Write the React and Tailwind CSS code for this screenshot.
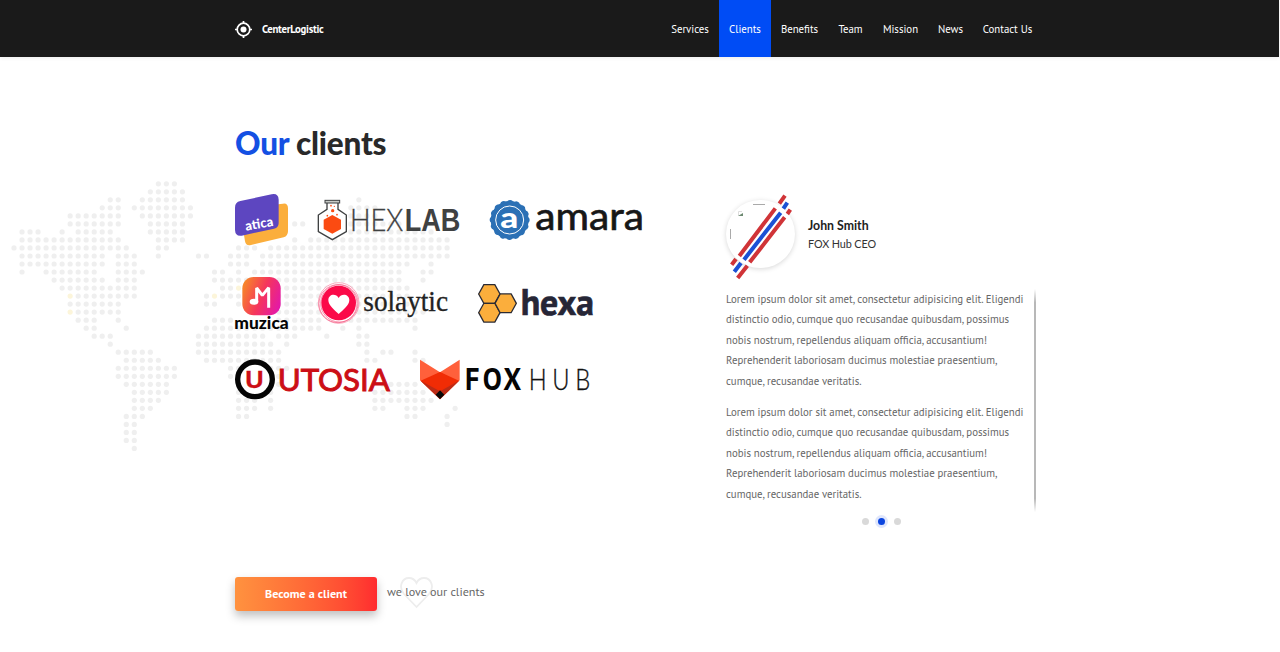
const MAP_ROWS = [
  "18-20", "17-21", "12-13,16-21,43", "11-13,15-22,42-45", "7-13,16-22,41-45",
  "7-13,17-21,35-36,40-48", "1-3,6,8-12,17-21,39-52", "1-13,18-21,35,37-54",
  "0-14,18-19,28-30,32-54", "1-11,13-15,18,23-24,27-29,31-54", "1-11,13-15,27-29,31-49,52",
  "1,4-10,13-16,25-26,28,30-48,51-52", "5-11,13-15,25-48,51", "6-15,26-49",
  "7-15,24-49", "7-13,24-25,28,32-50", "7-13,33-51", "8-10,13,25-27,33-38,41-50",
  "9-10,14,24-38,41,43,50", "10-12,23-31,33-35,39,43-44", "12,23-32,34,43-44",
  "13-17,23-33,44,46-47,50", "14-18,24-33,44-45,50-51", "13-20,27-34", "13-20,27-33",
  "14-19,28-33,46-50", "15-19,28-32,45-51", "15-18,28-30,32,45-52",
  "15-17,28-30,32,45-46,49-51,55", "14-16,28-29,49-50,54", "14-15,54", "14-15", "14-15", "15",
];
const HIGHLIGHTED = ["7-14", "7-16", "25-14", "28-13"];

function WorldMap() {
  const dots = [];
  MAP_ROWS.forEach((row, r) =>
    row.split(",").forEach((part) => {
      const [from, to = from] = part.split("-").map(Number);
      for (let c = from; c <= to; c++) dots.push([c, r]);
    })
  );
  return (
    <svg className="absolute left-0 top-[170px] -z-10" width="480" height="300" aria-hidden="true">
      {dots.map(([c, r]) => (
        <circle
          key={`${c}-${r}`}
          cx={14 + c * 8.02}
          cy={13.8 + r * 8.02}
          r="2.6"
          fill={HIGHLIGHTED.includes(`${c}-${r}`) ? "#fcf5da" : "#efefef"}
        />
      ))}
    </svg>
  );
}

function Word({ x, y, size, width, children, ...rest }) {
  return (
    <text x={x} y={y} fontSize={size} textLength={width} lengthAdjust="spacingAndGlyphs" {...rest}>
      {children}
    </text>
  );
}

function Atica() {
  return (
    <svg width="53" height="53" viewBox="0 0 159 159">
      <path d="M44 40 L144 29 Q159 27 159 43 V112 Q159 126 146 130 L48 153 Q33 157 30 142 L25 110 Z" fill="#fbae3c" />
      <path d="M16 21 L110 1 Q130 -3 131 17 V87 Q131 101 117 104 L20 125 Q1 128 0 108 V41 Q0 24 16 21Z" fill="#5d46c0" />
      <g transform="rotate(-10 34 108)">
        <Word x="33" y="110" size="40" width="84" fill="#fff" fontFamily="Lato, sans-serif" fontWeight="900">atica</Word>
      </g>
    </svg>
  );
}

function HexLab() {
  return (
    <svg className="overflow-visible" width="142" height="53" viewBox="0 0 426 159">
      <path d="M27 25 V46 L1 63 V113 L43 137 L85 113 V63 L60 46 V25" fill="#fff" stroke="#3f4142" strokeWidth="4" />
      <rect x="21" y="19" width="44" height="8" fill="#c7cbc7" stroke="#3f4142" strokeWidth="3" />
      <path d="M43 63 L69 77 V105 L43 119 L17 105 V77Z" fill="#fb4b12" />
      <circle cx="44" cy="50" r="5" fill="#fb4b12" />
      <circle cx="39" cy="35" r="2.5" fill="#fb4b12" />
      <circle cx="49" cy="37" r="2" fill="#fb4b12" />
      <circle cx="28" cy="65" r="2.500" fill="#fb4b12" />
      <circle cx="57" cy="62" r="2.500" fill="#fb4b12" />
      <Word x="96" y="111" size="92" width="160" fill="#3f4142" stroke="#3f4142" strokeWidth="1" fontFamily="Lato, sans-serif" fontWeight="300">HEX</Word>
      <Word x="260" y="111" size="94" width="167" fill="#3f4142" fontFamily="Liberation Sans, sans-serif" fontWeight="700">LAB</Word>
    </svg>
  );
}

function Amara() {
  return (
    <svg className="overflow-visible" width="153" height="53" viewBox="0 0 459 159">
      <circle cx="59" cy="78" r="57" fill="#2b70b5" />
      <circle cx="59" cy="78" r="51" fill="none" stroke="#2b70b5" strokeWidth="18" pathLength="160" strokeDasharray="0.1 9.9" strokeLinecap="round" />
      <circle cx="59" cy="78" r="42" fill="none" stroke="#fff" strokeWidth="3" />
      <Word x="31" y="101" size="88" width="54" fill="#fff" fontFamily="Lato, sans-serif" fontWeight="900">a</Word>
      <Word x="136" y="108" size="118" width="326" fill="#171717" fontFamily="Lato, sans-serif" fontWeight="400" stroke="#171717" strokeWidth="2">amara</Word>
    </svg>
  );
}

function Muzica() {
  return (
    <svg className="overflow-visible" width="53" height="53" viewBox="0 0 159 159">
      <defs>
        <linearGradient id="muzica" x1="0" x2="1" y1=".3" y2=".7">
          <stop stopColor="#f7842a" />
          <stop offset=".5" stopColor="#f5365c" />
          <stop offset="1" stopColor="#e319a8" />
        </linearGradient>
      </defs>
      <rect x="22" y="0" width="115" height="115" rx="34" fill="url(#muzica)" />
      <path d="M65 76 V33 L82 55 L101 32 V92" fill="none" stroke="#fff" strokeWidth="9" strokeLinejoin="bevel" />
      <ellipse cx="57" cy="74" rx="13" ry="9" fill="#fff" />
      <Word x="-2" y="157" size="51" width="163" fill="#050505" fontFamily="Lato, sans-serif" fontWeight="900">muzica</Word>
    </svg>
  );
}

function Solaytic() {
  return (
    <svg className="overflow-visible" width="130" height="53" viewBox="0 0 390 159">
      <circle cx="62" cy="78" r="61" fill="#fff" stroke="#f45b83" strokeWidth="1.5" />
      <circle cx="60" cy="80" r="57" fill="none" stroke="#f45b83" strokeWidth="2" />
      <circle cx="64" cy="79" r="56" fill="none" stroke="#f45b83" strokeWidth="2" />
      <circle cx="62" cy="78" r="52" fill="#fb0a49" />
      <path d="M62 111 C50 99 31 86 31 69 C31 51 54 47 62 63 C70 47 94 51 94 69 C94 86 74 99 62 111Z" fill="#fff" />
      <Word x="136" y="101" size="91" width="254" fill="#222" stroke="#222" strokeWidth="1" fontFamily="Liberation Serif, serif">solaytic</Word>
    </svg>
  );
}

function Hexa() {
  const cell = "M-17 -29 H17 L33 0 L17 29 H-17 L-33 0Z";
  return (
    <svg className="overflow-visible" width="115" height="53" viewBox="0 0 345 159">
      <g fill="#fbae3c" stroke="#2a2a33" strokeWidth="4">
        <path d={cell} transform="translate(34 51) scale(.97)" />
        <path d={cell} transform="translate(34 107) scale(.97)" />
        <path d={cell} transform="translate(83 79) scale(.97)" />
      </g>
      <Word x="128" y="113" size="108" width="220" fill="#262636" stroke="#262636" strokeWidth="2" fontFamily="PT Sans, Noto Sans, sans-serif" fontWeight="700">hexa</Word>
    </svg>
  );
}

function Utosia() {
  return (
    <svg className="overflow-visible" width="155" height="53" viewBox="0 0 465 159">
      <circle cx="60" cy="61" r="52" fill="#fff" stroke="#050505" strokeWidth="16" />
      <Word x="31" y="87" size="73" width="55" fill="#cc0f16" stroke="#cc0f16" strokeWidth="1" fontFamily="Liberation Sans, sans-serif" fontWeight="700">U</Word>
      <Word x="128" y="96" size="94" width="337" fill="#cc0f16" stroke="#cc0f16" strokeWidth="3" fontFamily="Lato, sans-serif" fontWeight="400">UTOSIA</Word>
    </svg>
  );
}

function FoxHub() {
  return (
    <svg className="overflow-visible" width="172" height="53" viewBox="0 0 516 159">
      <path d="M0 2 L60 40 L119 2 V64 L60 121 L0 64Z" fill="#ff603b" />
      <path d="M60 39 L117 65 L60 121 L2 65Z" fill="#f12c05" />
      <path d="M2 65 L60 97 L117 65 L60 121Z" fill="#bc2b16" />
      <path d="M12 66 L60 40 L108 66 L60 95Z" fill="#f12c05" />
      <path d="M60 94 L73 107 L60 120 L47 107Z" fill="#090909" />
      <text x="-0" y="93" fontSize="90" letterSpacing="10" fill="#050505" fontFamily="PT Sans, Open Sans, sans-serif" fontWeight="700" transform="translate(135 0) scale(.95 1)">FOX</text>
      <text x="0" y="93" fontSize="88" letterSpacing="21" fill="#111" stroke="#111" strokeWidth="1" fontFamily="Lato, sans-serif" fontWeight="300" transform="translate(326 0) scale(.81 1)">HUB</text>
    </svg>
  );
}

function StripeMark() {
  return (
    <svg className="absolute -left-[10px] -top-[18px]" width="90" height="100" viewBox="0 0 270 300" fill="none" strokeWidth="12">
      <path d="M70 210 L178 67 M47 236 L60 219 M190 53 L207 29 M101 229 L206 94 M65 276 L94 239 M214 84 L223 71" stroke="#d03438" />
      <path d="M84 221 L194 80 M55 257 L75 231 M202 68 L214 50" stroke="#1b51d5" />
    </svg>
  );
}

const NAV = [
  ["Services", "w-[58px]"],
  ["Clients", "w-[52px] bg-[#004cf5]"],
  ["Benefits", "w-[57px]"],
  ["Team", "w-[45px]"],
  ["Mission", "w-[55px]"],
  ["News", "w-[45px]"],
  ["Contact Us", "w-[69px]"],
];

function Header() {
  return (
    <header className="flex h-[57px] w-[1279px] bg-[#1a1a1a] pl-[235px] shadow-[0_1px_4px_rgba(0,0,0,0.08)]">
      <a className="flex w-[426px] items-center gap-[10px] pt-[2px] text-white">
        <svg width="17" height="17" viewBox="0 0 17 17" fill="none" stroke="white">
          <circle cx="8.5" cy="8.5" r="6.3" strokeWidth="1.7" />
          <circle cx="8.5" cy="8.5" r="3" fill="white" stroke="none" />
          <path d="M8.5 0v2.5M8.5 14.500v2.500M0 8.500h2.500M14.500 8.500h2.500" strokeWidth="1.700" />
        </svg>
        <span className="whitespace-nowrap text-[10.8px] font-bold tracking-[-0.3px]">CenterLogistic</span>
      </a>
      <nav className="flex">
        {NAV.map(([label, look]) => (
          <a key={label} className={`flex items-center justify-center whitespace-nowrap pt-[2px] text-[10.8px] font-medium text-white ${look}`}>
            {label}
          </a>
        ))}
      </nav>
    </header>
  );
}

function Quote() {
  return (
    <p>
      Lorem ipsum dolor sit amet, consectetur adipisicing elit. Eligendi<br />
      distinctio odio, cumque quo recusandae quibusdam, possimus<br />
      nobis nostrum, repellendus aliquam officia, accusantium!<br />
      Reprehenderit laboriosam ducimus molestiae praesentium,<br />
      cumque, recusandae veritatis.
    </p>
  );
}

function Testimonial() {
  return (
    <section className="w-[310px] pt-[6px]">
      <div className="flex items-center gap-[13px]">
        <div className="relative mt-[4px] h-[68px] w-[69px] rounded-full bg-white shadow-[0_1px_5px_rgba(0,0,0,0.16)] -translate-y-[4px]">
          <svg className="absolute left-[4px] top-[4px]" width="40" height="40" fill="none">
            <path d="M23 .500 H35 M.5 25 V35" stroke="#aaa" />
            <path d="M8.500 11.500 V7.500 H12" stroke="#ddd" />
            <path d="M8 12 L13 9 V12Z" fill="#6d8a72" />
          </svg>
          <div className="absolute left-0 top-[4px]">
            <StripeMark />
          </div>
        </div>
        <div className="-mt-[4px] font-[Lato,sans-serif]">
          <h3 className="text-[12.300px] font-bold leading-[18px] text-[#222]">John Smith</h3>
          <p className="text-[10.800px] leading-[17px] tracking-[-0.1px] text-[#333]">FOX Hub CEO</p>
        </div>
      </div>
      <div className="mt-[17px] flex h-[223px] justify-between">
        <div className="flex flex-col gap-[11px] whitespace-nowrap text-[10.800px] leading-[20.4px] text-[#666]">
          <Quote />
          <Quote />
        </div>
        <div className="w-[2px] bg-[linear-gradient(to_bottom,transparent,#b8b8b8_6%,#b8b8b8_94%,transparent)]" />
      </div>
      <div className="mt-[3px] flex h-[13px] items-center justify-center gap-[6px]">
        <span className="size-[7px] rounded-full bg-[#d9d9d9]" />
        <span className="flex size-[13px] items-center justify-center rounded-full bg-[#dfe6fc]">
          <span className="size-[7px] rounded-full bg-[#0b45df]" />
        </span>
        <span className="size-[7px] rounded-full bg-[#d9d9d9]" />
      </div>
    </section>
  );
}

export default function App() {
  return (
    <div className="relative isolate h-[652px] overflow-hidden bg-white font-['PT_Sans','Noto_Sans',sans-serif]">
      <Header />
      <WorldMap />
      <main className="pl-[235px] pt-[66px]">
        <h2 className="font-[Lato,sans-serif] text-[31.500px] font-black leading-[40px] tracking-[-0.22px] text-[#292929]">
          <span className="text-[#1450e3]">Our</span> clients
        </h2>
        <div className="flex h-[384px] pt-[31px]">
          <div className="flex w-[491px] flex-col gap-[29.500px]">
            <div className="flex gap-[30px]"><Atica /><HexLab /><Amara /></div>
            <div className="flex gap-[30px]"><Muzica /><Solaytic /><Hexa /></div>
            <div className="flex gap-[30px]"><Utosia /><FoxHub /></div>
          </div>
          <Testimonial />
        </div>
        <div className="mt-[30px] flex gap-[10px]">
          <button className="h-[34px] w-[142px] rounded-[3px] bg-linear-to-r from-[#ff923f] to-[#ff2b2f] text-[12.100px] font-bold text-white shadow-[0_5px_10px_rgba(0,0,0,0.25)]">
            Become a client
          </button>
          <div className="relative h-[34px] text-[12.100px] leading-[30px] text-[#666]">
            <svg className="absolute left-[13px] top-0 -z-10" width="33" height="32" fill="none" stroke="#ededed" strokeWidth="1.800">
              <path d="M16.500 30 L4 17 C-2 10 2 1 9 1 C13 1 15 3 16.500 6 C18 3 20 1 24 1 C31 1 35 10 29 17Z" />
            </svg>
            we love our clients
          </div>
        </div>
      </main>
    </div>
  );
}
